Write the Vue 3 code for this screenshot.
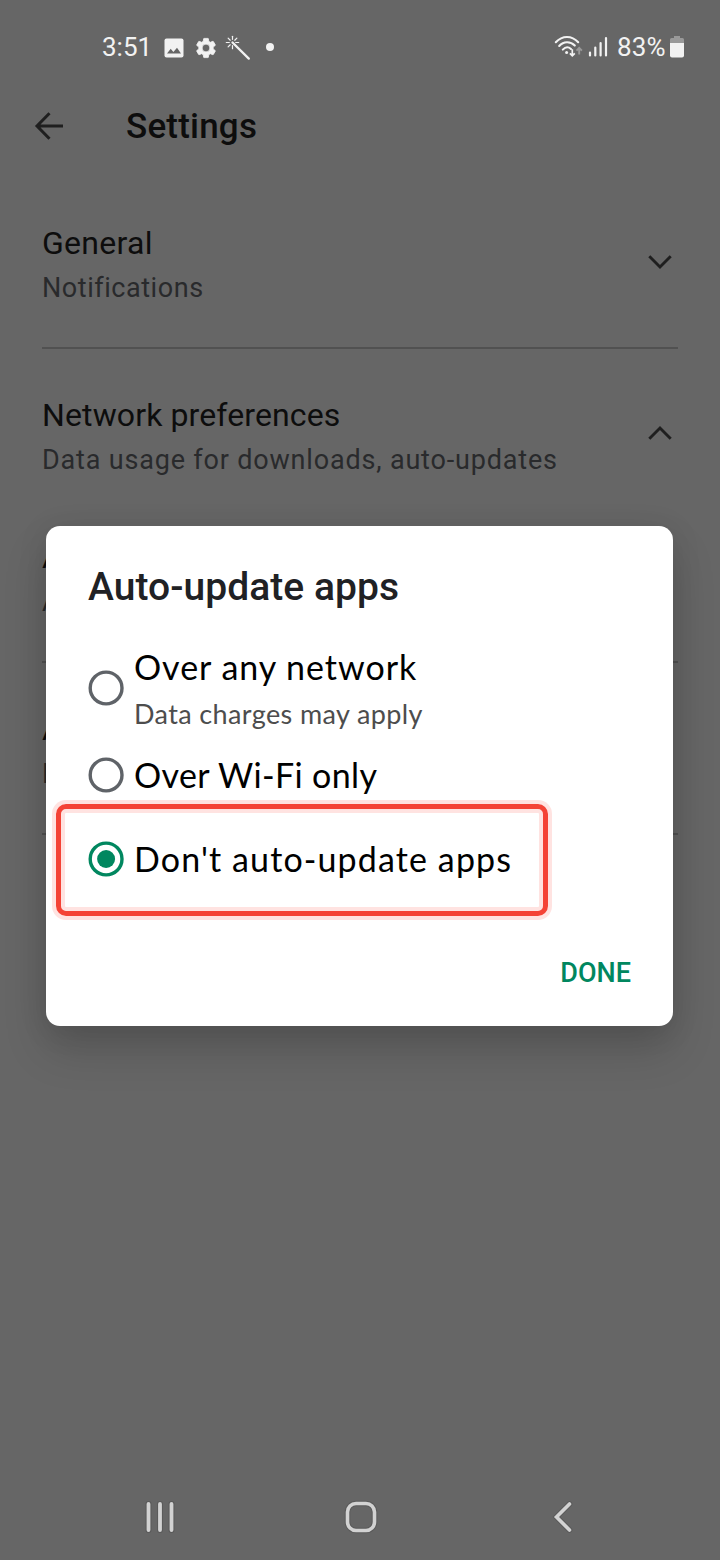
<script setup>
const sections = [
  { title: 'General', sub: 'Notifications', chevron: 'down', cls: 'general' },
  { title: 'Network preferences', sub: 'Data usage for downloads, auto-updates', chevron: 'up', cls: 'network' },
  { title: 'A', sub: 'A', cls: 'covered-first' },
  { title: 'A', sub: 'D', cls: 'covered-second' },
]
const options = [
  { label: 'Over any network', note: 'Data charges may apply', cls: 'any' },
  { label: 'Over Wi-Fi only', cls: 'wifi' },
  { label: "Don't auto-update apps", checked: true, cls: 'never' },
]
const rays = [0, 45, 90, 135, 180, 225, 270, 315]
</script>

<template>
  <div class="screen">
    <header class="status">
      <div class="left">
        <span class="clock">3:51</span>
        <svg class="image" width="20" height="20" viewBox="0 0 20 20">
          <rect x=".5" y=".5" width="19" height="19" rx="2" fill="#f2f2f2" />
          <path d="M3 15.5 6.7 10.7 9.4 13.9 13 9.7 17 15.5Z" fill="#666" />
        </svg>
        <svg class="gear" width="24" height="24" viewBox="0 0 24 24">
          <path fill="#f2f2f2" stroke="#f2f2f2" stroke-width=".8" d="M19.14 12.94c.04-.3.06-.61.06-.94s-.02-.64-.07-.94l2.03-1.58a.49.49 0 0 0 .12-.61l-1.92-3.32a.49.49 0 0 0-.59-.22l-2.39.96a7 7 0 0 0-1.62-.94l-.36-2.54a.48.48 0 0 0-.48-.41h-3.84a.48.48 0 0 0-.47.41l-.36 2.54c-.59.24-1.13.57-1.62.94l-2.39-.96a.48.48 0 0 0-.59.22L2.74 8.87a.48.48 0 0 0 .12.61l2.03 1.58c-.05.3-.09.63-.09.94s.02.64.07.94l-2.03 1.58a.49.49 0 0 0-.12.61l1.92 3.32c.12.22.37.29.59.22l2.39-.96c.5.38 1.03.7 1.62.94l.36 2.54c.05.24.24.41.48.41h3.84c.24 0 .44-.17.47-.41l.36-2.54a7 7 0 0 0 1.62-.94l2.39.96c.22.08.47 0 .59-.22l1.92-3.32a.48.48 0 0 0-.12-.61ZM12 15.9a3.9 3.9 0 1 1 0-7.8 3.9 3.9 0 0 1 0 7.8Z" />
        </svg>
        <svg class="wand" width="26" height="26" viewBox="0 0 26 26">
          <g stroke="#f2f2f2" stroke-width="1.2" stroke-linecap="round">
            <path v-for="r in rays" :key="r" d="M7.5 4.3V1.3" :transform="`rotate(${r} 7.5 7.5)`" />
          </g>
          <path d="M7.500 7.500 23.800 23.600" stroke="#f2f2f2" stroke-width="2.3" stroke-linecap="round" />
        </svg>
        <i class="dot"></i>
      </div>
      <div class="right">
        <svg width="54" height="24" viewBox="0 0 54 24">
          <g fill="none" stroke="#f2f2f2" stroke-width="2.1" stroke-linecap="round">
            <path d="M1.8 7.2C8.3.2 17.7.2 24.2 7.2" />
            <path d="M5.2 11C9.6 6 16.4 6 20.8 10.6" />
            <path d="M8.8 14.6C11.400 11.8 14.600 11.8 17 14" />
          </g>
          <circle cx="12.6" cy="17.6" r="1.5" fill="#f2f2f2" />
          <path d="M18.3 14.3v6.2M15.9 18.3l2.4 2.5 2.5-2.5" fill="none" stroke="#f2f2f2" stroke-width="1.7" />
          <path d="M25.2 19.5v-6M22.5 15.6l2.7-2.7 2.7 2.7" fill="none" stroke="#999" stroke-width="1.9" />
          <path d="M36 17.5v3M41.3 12.5v8M46.6 8v12.5M52 3v17.5" stroke="#f2f2f2" stroke-width="2.2" stroke-linecap="round" />
        </svg>
        <span class="percent">83%</span>
        <svg class="battery" width="16" height="22" viewBox="0 0 16 22">
          <path d="M5 0h6v2h2.5a1.5 1.5 0 0 1 1.5 1.5V8H1V3.500A1.500 1.500 0 0 1 2.500 2H5Z" fill="#999" />
          <path d="M1 7h14v12.500a2 2 0 0 1-2 2H3a2 2 0 0 1-2-2Z" fill="#f2f2f2" />
        </svg>
      </div>
    </header>

    <div class="appbar">
      <svg width="30" height="30" viewBox="0 0 30 30" fill="none" stroke="#1f1f1f" stroke-width="3">
        <path d="M29 15H4M15.500 2.200 3 15l12.500 12.800" />
      </svg>
      <h1>Settings</h1>
    </div>

    <main>
      <section v-for="s in sections" :key="s.cls" :class="s.cls">
        <div>
          <h2>{{ s.title }}</h2>
          <p>{{ s.sub }}</p>
        </div>
        <svg v-if="s.chevron" :class="s.chevron" width="26" height="16" viewBox="0 0 26 16" fill="none" stroke="#1f1f1f" stroke-width="2.900">
          <path d="M2.300 2.300 13 13 23.700 2.300" />
        </svg>
      </section>
    </main>

    <nav>
      <svg width="36" height="36" viewBox="0 0 36 36">
        <path d="M6.500 5v26M18 5v26M29.500 5v26" stroke="#5a5a5a" stroke-width="6" stroke-linecap="round" />
        <path d="M6.500 5v26M18 5v26M29.500 5v26" stroke="#d2d2d2" stroke-width="3.800" stroke-linecap="round" />
      </svg>
      <svg width="36" height="36" viewBox="0 0 36 36" fill="none">
        <rect x="4.500" y="4.500" width="27" height="27" rx="8.500" stroke="#5a5a5a" stroke-width="5.600" />
        <rect x="4.500" y="4.500" width="27" height="27" rx="8.500" stroke="#d2d2d2" stroke-width="3.600" />
      </svg>
      <svg width="36" height="36" viewBox="0 0 36 36" fill="none" stroke-linecap="round">
        <path d="M25.500 5 12.500 18l13 13" stroke="#5a5a5a" stroke-width="5.600" />
        <path d="M25.500 5 12.500 18l13 13" stroke="#d2d2d2" stroke-width="3.600" />
      </svg>
    </nav>

    <div class="dialog">
      <h3>Auto-update apps</h3>
      <div class="options">
        <label v-for="o in options" :key="o.label" :class="['option', o.cls]">
          <svg width="36" height="36" viewBox="0 0 36 36">
            <circle cx="18.100" cy="18" r="15.900" fill="none" :stroke="o.checked ? '#01875f' : '#5f6368'" stroke-width="3.400" />
            <circle v-if="o.checked" cx="18.100" cy="18" r="9" fill="#01875f" />
          </svg>
          <span class="texts">
            <span class="label">{{ o.label }}</span>
            <span v-if="o.note" class="note">{{ o.note }}</span>
          </span>
          <i v-if="o.checked" class="mark"></i>
        </label>
      </div>
      <button>DONE</button>
    </div>
  </div>
</template>

<style>
body { background: #666; }
</style>

<style scoped>
* { box-sizing: border-box; }
.screen {
  position: relative;
  width: 720px;
  height: 1560px;
  overflow: hidden;
  background: #666;
  display: flex;
  flex-direction: column;
  font-family: Roboto, "Liberation Sans", sans-serif;
}
h1, h2, h3, p { margin: 0; font-weight: 400; white-space: nowrap; }
svg { display: block; flex: none; }
.status {
  height: 95px;
  flex: none;
  display: flex;
  align-items: center;
  justify-content: space-between;
  padding: 0 35px 2px 102px;
  color: #f2f2f2;
  font-size: 26px;
}
.left, .right { display: flex; align-items: center; }
.left svg { margin-top: 2px; }
.clock { width: 62px; }
.gear { margin-left: 10px; }
.wand { margin-left: 7px; }
.dot { width: 8px; height: 8px; border-radius: 50%; background: #f2f2f2; margin-left: 15px; }
.percent { margin-left: 9px; width: 52px; letter-spacing: .2px; }
.appbar { height: 62px; flex: none; display: flex; align-items: center; padding-left: 34px; }
.appbar h1 { margin-left: 62px; font-size: 35px; font-weight: 500; letter-spacing: .2px; color: #0d0d0d; }
main { flex: 1; padding: 20px 42px 0; }
section {
  height: 172px;
  padding-top: 46px;
  display: flex;
  justify-content: space-between;
  border-bottom: 2px solid #515151;
}
section.network { height: 142px; border-bottom: 0; }
section svg { margin: 31px 5px 0 0; }
section svg.up { margin-top: 30px; transform: rotate(180deg); }
h2 { font-size: 32px; line-height: 40px; color: #0d0d0d; letter-spacing: .12px; }
section p { margin-top: 5px; font-size: 27px; line-height: 40px; color: #292a2c; letter-spacing: .82px; }
.general h2 { letter-spacing: .3px; }
.general p { letter-spacing: .55px; }
nav { height: 86px; flex: none; display: flex; justify-content: space-between; align-items: center; padding: 0 140px 0 142px; }
.dialog {
  position: absolute;
  left: 46px;
  top: 526px;
  width: 627px;
  height: 500px;
  border-radius: 14px;
  background: #fff;
  box-shadow: 0 24px 44px rgba(0, 0, 0, .16), 0 4px 30px rgba(0, 0, 0, .1);
  padding: 37px 42px 0;
  display: flex;
  flex-direction: column;
}
h3 { font-size: 39px; line-height: 48px; font-weight: 500; color: #202124; letter-spacing: .05px; }
.options { margin-top: 34px; }
.option { position: relative; display: flex; align-items: center; font-family: Lato, Roboto, sans-serif; height: 85px; }
.option.any { height: 87px; }
.option.any svg { margin-top: -2px; }
.option.never { height: 84px; }
.texts { margin-left: 10px; display: flex; flex-direction: column; white-space: nowrap; }
.label { font-size: 34px; line-height: 44px; color: #000; }
.any .label { letter-spacing: .97px; }
.wifi .label { letter-spacing: .37px; }
.never .label { letter-spacing: 1.12px; }
.note { margin-top: 7px; font-size: 27px; line-height: 36px; letter-spacing: .38px; color: #4d4d4d; }
.mark {
  position: absolute;
  left: -32px;
  top: -13px;
  width: 492px;
  height: 112px;
  border: 5px solid #f44336;
  border-radius: 10px;
  box-shadow: 0 0 0 4px #ffe3e1, inset 0 0 0 4px #ffe3e1;
}
button {
  align-self: flex-end;
  margin-top: 52px;
  padding: 0;
  border: 0;
  background: none;
  font: 500 27px/40px Roboto, sans-serif;
  color: #01875f;
}
</style>
